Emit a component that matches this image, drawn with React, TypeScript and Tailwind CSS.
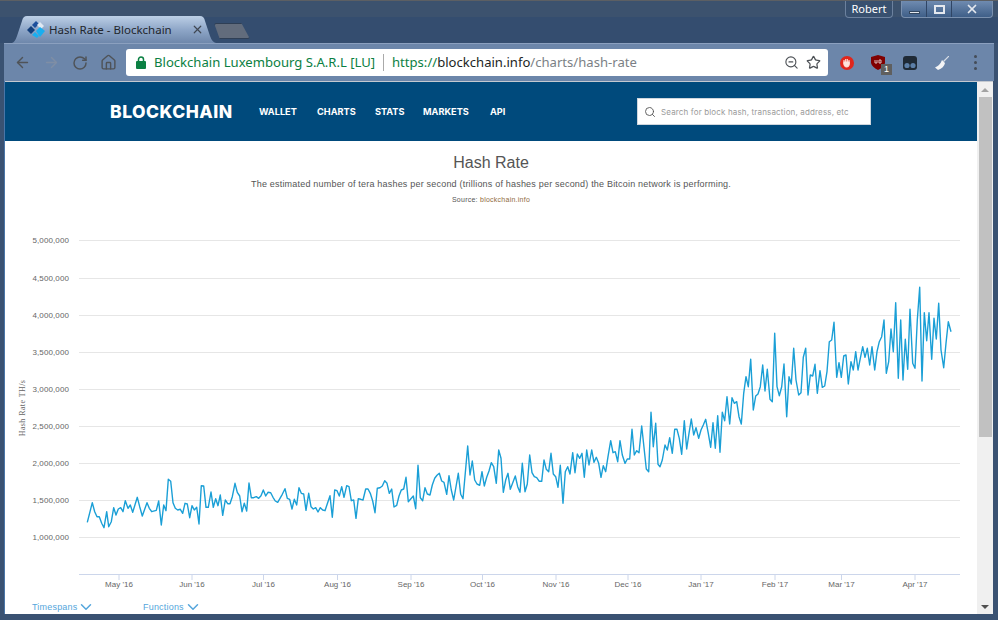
import { ArrowLeft, ArrowRight, ChevronDown, Home, RotateCw, Search, Star, X, ZoomOut } from "lucide-react";

// traced from the chart, [x, y] flat lists in 3x crop coordinates
const partA = [262,247,277,188,284,215,291,230,298,230,305,250,312,263,320,215,326,260,334,245,341,203,348,225,355,207,362,203,369,215,376,182,384,205,391,195,398,217,412,172,419,200,427,228,441,188,448,205,455,215,469,211,476,183,484,255,491,195,498,212,505,118,512,124,519,188,526,205,533,210,541,208,548,220,555,190,562,192,569,233,576,197,583,210,590,202,597,252,604,137,611,138,618,202,625,202,633,156,640,202,647,176,654,197,661,165,668,226,676,180,683,191,690,191,697,170,705,130,712,157,719,168,726,215,733,190,740,213,747,129,754,173,761,173,769,170,776,175,783,167,790,150,797,168,804,157,812,158,819,172,826,183,833,187,840,175,847,163,855,146,862,175,869,178,876,207,883,178,890,195,897,143,904,160,911,162,918,211,926,160,933,200,940,207,947,203,954,216,961,203,968,210,975,212,990,167];
const partB = [7,352,14,270,21,272,28,288,35,260,42,292,50,257,57,260,64,302,71,300,78,355,85,296,92,298,99,300,107,267,114,267,121,280,128,303,135,338,142,265,150,263,157,258,164,242,171,250,178,280,185,267,192,321,200,316,207,288,214,270,221,267,228,232,235,305,242,297,250,288,257,326,264,196,271,293,278,302,285,263,292,282,300,285,307,255,314,235,321,226,328,220,335,243,342,247,350,283,357,227,364,270,371,300,385,220,392,283,399,296,413,138,420,225,427,183,434,240,441,252,449,256,456,215,463,258,470,232,477,213,484,188,491,200,499,250,506,150,513,175,520,277,527,240,534,220,541,268,556,228,563,260,570,277,577,190,585,275,592,252,599,165,606,218,613,230,620,233,628,244,635,244,642,180,649,208,656,215,663,160,670,222,677,230,684,262,691,196,699,310,706,215,713,200,720,222,728,158,735,218,742,162,749,175,756,160,763,232,770,150,777,195,785,150,792,187,799,172,806,190,813,232,820,197,827,215,834,170,842,122,849,158,856,155,863,185,870,122,877,165,885,190,892,177,899,177,906,88,913,165,920,152,927,158,935,78,949,207,956,215,963,37,970,140,977,70,984,193];
const partC = [0,590,7,570,15,525,22,540,29,503,37,550,44,478,51,478,58,505,65,553,73,452,80,537,87,490,94,447,101,495,108,473,116,505,123,480,130,465,137,448,145,490,152,532,159,458,166,535,173,437,180,547,187,427,194,452,201,380,209,462,216,383,223,400,230,395,237,440,244,462,251,370,258,320,265,350,272,268,280,420,287,378,294,372,301,350,308,285,315,363,322,298,330,388,337,395,344,190,351,350,358,377,365,350,372,282,380,440,387,320,394,342,401,235,408,330,416,375,423,368,430,262,437,235,444,375,451,315,458,318,465,283,472,370,480,302,487,352,494,348,501,305,508,215,515,210,522,157,530,322,537,278,544,322,551,258,558,255,565,342,573,275,580,300,587,245,594,300,601,265,608,230,615,262,622,235,629,285,636,230,644,300,651,245,658,215,665,200,672,150,679,310,686,275,693,177,700,245,707,98,715,325,722,150,729,330,736,208,743,298,750,118,758,280,765,295,772,150,779,52,786,333,793,128,800,212,807,128,815,268,822,145,829,207,836,100,843,240,851,293,858,220,865,155,873,185];

function toPoints(flat: number[], ox: number, oy: number) {
  const out: string[] = [];
  for (let i = 0; i < flat.length; i += 2) {
    out.push(`${(ox + flat[i] / 3).toFixed(1)},${(oy + flat[i + 1] / 3).toFixed(1)}`);
  }
  return out.join(" ");
}

const linePoints = [toPoints(partA, 0, 440), toPoints(partB, 330, 400), toPoints(partC, 660, 270)].join(" ");

const yLabels = [
  ["5,000,000", 240],
  ["4,500,000", 278],
  ["4,000,000", 315],
  ["3,500,000", 352],
  ["3,000,000", 389],
  ["2,500,000", 426],
  ["2,000,000", 463],
  ["1,500,000", 500],
  ["1,000,000", 537],
] as const;

const xLabels = [
  ["May '16", 119],
  ["Jun '16", 192],
  ["Jul '16", 263.5],
  ["Aug '16", 337.5],
  ["Sep '16", 411],
  ["Oct '16", 482.5],
  ["Nov '16", 556],
  ["Dec '16", 628],
  ["Jan '17", 701],
  ["Feb '17", 775],
  ["Mar '17", 841.5],
  ["Apr '17", 915],
] as const;

function Chart() {
  return (
    <svg width="972" height="456" viewBox="5 141 972 456" className="block" style={{ fontFamily: "'Liberation Sans', sans-serif" }}>
      {yLabels.map(([label, y]) => (
        <g key={label}>
          <line x1="79" x2="960" y1={y + 0.5} y2={y + 0.5} stroke="#e6e6e6" />
          <text x="69" y={y + 3} textAnchor="end" fontSize="8" letterSpacing="0.1" fill="#666666">{label}</text>
        </g>
      ))}
      <line x1="79" x2="960" y1="574.5" y2="574.5" stroke="#ccd6eb" />
      {xLabels.map(([label, x]) => (
        <g key={label}>
          <line x1={x} x2={x} y1="574" y2="580" stroke="#ccd6eb" />
          <text x={x} y="587" textAnchor="middle" fontSize="8" fill="#666666">{label}</text>
        </g>
      ))}
      <text transform="translate(25 408) rotate(-90)" textAnchor="middle" fontSize="8" letterSpacing="0.4" fill="#666666" style={{ fontFamily: "'Liberation Serif', serif" }}>Hash Rate TH/s</text>
      <polyline points={linePoints} fill="none" stroke="#1a9fd6" strokeWidth="1.4" strokeLinejoin="round" />
    </svg>
  );
}

function Favicon() {
  return (
    <svg width="18" height="18" viewBox="0 0 18 18">
      <path d="M0 9 L4 5 L8 9 L4 13 Z" fill="#123f7c" />
      <path d="M5 4 L9 0 L12 3 L8 7 Z" fill="#1d4f9c" />
      <path d="M10 4 L13 1 L17 5 L14 8 Z" fill="#dfe8f2" />
      <path d="M9 10 L13 6 L18 10 L13 16 Z" fill="#18aef0" />
      <path d="M5 14 L8 11 L12 15 L10 17 Z" fill="#18aef0" />
    </svg>
  );
}

function Extensions() {
  return (
    <div className="flex items-center w-[150px] pl-[10px] gap-[18px]">
      <svg width="14" height="14" viewBox="0 0 14 14" className="ml-[2px] -mr-[1px]">
        <circle cx="7" cy="7" r="7" fill="#e0261c" />
        <path d="M4 6 V4 M5.7 6 V3 M7.3 6 V3 M9 6 V4 M3.8 6 H9.3 V8 Q9 11 6.5 11 Q4.5 11 3.8 8 Z" stroke="#ffe3dc" fill="#ffe3dc" strokeWidth="1.1" />
      </svg>
      <div className="relative w-[14px] h-[15px]">
        <svg width="14" height="15" viewBox="0 0 14 15">
          <path d="M7 0 L14 2 V8 Q13 12 7 15 Q1 12 0 8 V2 Z" fill="#800000" />
          <path d="M4 5 V8 H6 V5 M8 8 V5 H10 V8 Z" stroke="#e8d0d0" fill="none" strokeWidth="0.9" />
        </svg>
        <div className="absolute left-[10px] top-[9px] w-[11px] h-[11px] bg-[#5f5f5f] text-white text-[9px] leading-[11px] text-center font-['Liberation_Sans']">1</div>
      </div>
      <svg width="14" height="14" viewBox="0 0 14 14">
        <rect width="14" height="14" rx="3" fill="#1f2a36" />
        <circle cx="4" cy="9.5" r="2.6" fill="#5c7fa8" />
        <circle cx="10" cy="9.5" r="2.6" fill="#5c7fa8" />
      </svg>
      <svg width="14" height="14" viewBox="0 0 14 14">
        <path d="M14 0 L8.5 5.5" stroke="#d7dde6" strokeWidth="1.2" />
        <path d="M7 4 L10 7 Q9 12 3 14 L0 11.5 Q5 9.5 7 4 Z" fill="#f3f4f6" />
      </svg>
      <div className="flex flex-col gap-[3px] ml-[7px]">
        <span className="w-[3px] h-[3px] rounded-full bg-[#444c57]" />
        <span className="w-[3px] h-[3px] rounded-full bg-[#444c57]" />
        <span className="w-[3px] h-[3px] rounded-full bg-[#444c57]" />
      </div>
    </div>
  );
}

function TitleStrip() {
  return (
    <div className="relative h-[43px] shrink-0 bg-[#344d6f]">
      <div className="h-[17px] bg-[#3c526e] border-t border-[#5c5f63]" />
      <div className="flex h-[26px] pl-[12px] items-start">
        {/* active tab */}
        <div className="relative w-[204px] h-[27px] -mt-[1px] flex items-center pl-[15px]">
          <svg width="204" height="27" viewBox="0 0 204 27" className="absolute inset-0">
            <defs>
              <linearGradient id="tabFill" x1="0" x2="0" y1="0" y2="1">
                <stop offset="0" stopColor="#bccfe6" />
                <stop offset="0.5" stopColor="#8fa7c8" />
                <stop offset="1" stopColor="#6e87ab" />
              </linearGradient>
            </defs>
            <path d="M0 27 Q3 26 5 20 L10 5 Q11 0 15 0 H188 Q192 0 193 5 L198 20 Q200 26 204 27 Z" fill="url(#tabFill)" />
          </svg>
          <div className="relative flex items-center gap-[4px] w-full">
            <Favicon />
            <span className="text-[11.5px] text-[#22262c] font-['Noto_Sans'] w-[134px] whitespace-nowrap">Hash Rate - Blockchain</span>
            <X size={13} strokeWidth={2.2} className="text-[#3f4752] ml-[4px]" />
          </div>
        </div>
        {/* new tab button */}
        <div className="-ml-[2px] mt-[6px] w-[36px] h-[16px] bg-[#626c7c] border border-[#2f3f55] rounded-[2px] [clip-path:polygon(0_0,76%_0,100%_100%,16%_100%)]" />
      </div>
      {/* profile + window controls */}
      <div className="absolute right-[5px] top-[1px] flex items-start gap-[8px]">
        <div className="w-[48px] h-[17px] rounded-b-[4px] border border-t-0 border-[#6c819e] bg-[#38506f] text-white text-[11px] leading-[16px] text-center font-['Noto_Sans']">Robert</div>
        <div className="flex h-[17px] w-[92px] rounded-b-[4px] border border-t-0 border-[#7a90ae] bg-[linear-gradient(#6f8bb0,#3f5f88)] text-[#e4e8ee]">
          <div className="w-[25px] flex items-end justify-center pb-[3px] border-r border-[#2f4565]"><span className="w-[11px] h-[3px] bg-[#e4e8ee] border border-[#33475f]" /></div>
          <div className="w-[25px] flex items-center justify-center border-r border-[#2f4565]"><span className="w-[11px] h-[9px] border-2 border-[#e4e8ee]" /></div>
          <div className="flex-1 flex items-center justify-center"><X size={14} strokeWidth={3} /></div>
        </div>
      </div>
    </div>
  );
}

function Toolbar() {
  return (
    <div className="mx-[4px] h-[38px] shrink-0 bg-[#6c86aa] border-t border-[#8ba0bf] flex items-center">
      <div className="flex items-center w-[122px] pl-[10px] gap-[12px] text-[#4f5358]">
        <ArrowLeft size={17} strokeWidth={2} />
        <ArrowRight size={17} strokeWidth={2} className="text-[#7f8ea5]" />
        <RotateCw size={16} strokeWidth={2.2} />
        <Home size={17} strokeWidth={2} />
      </div>
      <div className="w-[702px] h-[27px] bg-white rounded-[3px] flex items-center font-['Noto_Sans'] text-[13.1px] whitespace-nowrap">
        <svg width="10" height="13" viewBox="0 0 10 13" className="ml-[10px] mr-[8px]">
          <path d="M2.5 5.5 V3.5 A2.5 2.5 0 0 1 7.5 3.5 V5.5" stroke="#0b8043" strokeWidth="1.5" fill="none" />
          <rect y="5" width="10" height="8" rx="1" fill="#0b8043" />
        </svg>
        <span className="text-[#0b8043] w-[229px]">Blockchain Luxembourg S.A.R.L [LU]</span>
        <span className="w-[1px] h-[17px] bg-[#aaaaaa] mr-[8px]" />
        <span className="text-[#0b8043]">https://</span>
        <span className="text-[#1c1f24]">blockchain.info</span>
        <span className="text-[#7b7f85]">/charts/hash-rate</span>
        <span className="flex-1" />
        <ZoomOut size={15} strokeWidth={1.8} className="text-[#4d5156]" />
        <Star size={15} strokeWidth={2} className="text-[#4d5156] ml-[7px] mr-[7px]" />
      </div>
      <Extensions />
    </div>
  );
}

function SiteHeader() {
  return (
    <div className="h-[59px] shrink-0 bg-[#004a7c] flex items-center pl-[105px] text-white font-['Inter']">
      <span className="w-[149px] text-[17.5px] font-extrabold tracking-[0.5px] leading-none">BLOCKCHAIN</span>
      <nav className="w-[378px] grid grid-cols-[58px_58px_48px_67px_auto] text-[9.2px] font-bold">
        <span>WALLET</span>
        <span>CHARTS</span>
        <span>STATS</span>
        <span>MARKETS</span>
        <span>API</span>
      </nav>
      <div className="w-[234px] h-[27px] bg-white border border-[#cfd6dd] flex items-center pl-[6px] gap-[5px]">
        <Search size={12} strokeWidth={1.8} className="text-[#555555]" />
        <span className="text-[8px] tracking-[0.15px] text-[#9a9a9a] whitespace-nowrap">Search for block hash, transaction, address, etc</span>
      </div>
    </div>
  );
}

export default function App() {
  return (
    <div className="w-[998px] h-[620px] overflow-hidden flex flex-col bg-[#3a5272]">
      <TitleStrip />
      <Toolbar />
      <div className="flex h-[533px] shrink-0 ml-[5px] mr-[5px] border-t border-[#c4c9d0] shadow-[-1px_0_0_#4a76a8]">
        <div className="w-[972px] bg-white flex flex-col overflow-hidden">
          <SiteHeader />
          <div className="shrink-0 text-center font-['Liberation_Sans'] text-[#555555]">
            <h1 className="text-[16px] leading-[18px] mt-[13px]">Hash Rate</h1>
            <p className="text-[9px] leading-[11px] tracking-[0.2px] mt-[7px]">The estimated number of tera hashes per second (trillions of hashes per second) the Bitcoin network is performing.</p>
            <p className="text-[7px] leading-[9px] tracking-[0.25px] mt-[5px]">Source: <span className="text-[#8f6a3c]">blockchain.info</span></p>
          </div>
          <div className="shrink-0 -mt-[63px]">
            <Chart />
          </div>
          <div className="shrink-0 flex text-[#55a6dc] text-[9px] leading-[12px] font-['Liberation_Sans'] tracking-[0.2px] pl-[27px] mt-[4px]">
            <span className="w-[111px] flex items-center gap-[0px]">Timespans <ChevronDown size={18} strokeWidth={2} className="-my-[3px]" /></span>
            <span className="flex items-center gap-[0px]">Functions <ChevronDown size={18} strokeWidth={2} className="-my-[3px]" /></span>
          </div>
        </div>
        <div className="w-[16px] bg-[#f0f0f0] flex flex-col items-center">
          <span className="mt-[6px] w-0 h-0 border-x-[4px] border-x-transparent border-b-[4px] border-b-[#a3a3a3]" />
          <span className="mt-[5px] w-[13px] h-[340px] bg-[#c1c1c1]" />
          <span className="mt-auto mb-[5px] w-0 h-0 border-x-[4px] border-x-transparent border-t-[4px] border-t-[#505050]" />
        </div>
      </div>
    </div>
  );
}
